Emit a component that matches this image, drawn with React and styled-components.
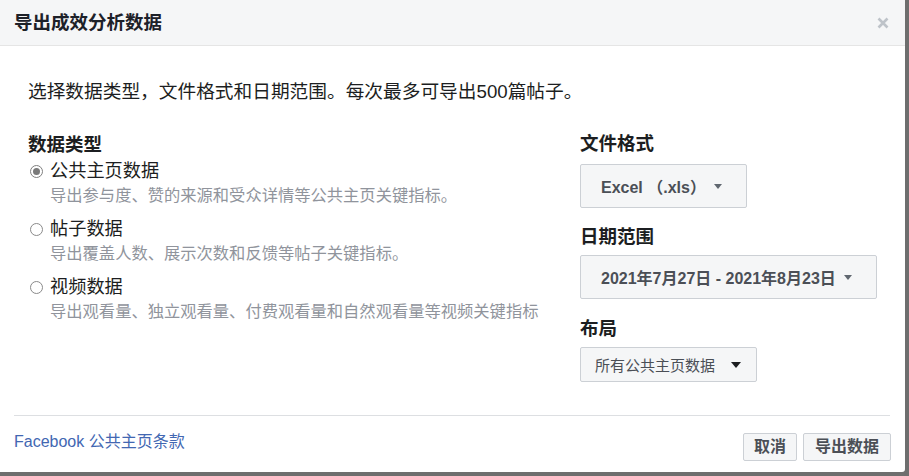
import React from "react";
import styled, { createGlobalStyle } from "styled-components";

const GlobalStyle = createGlobalStyle`
  html, body {
    margin: 0;
    padding: 0;
    background: #6e6e6e;
  }
  body {
    font-family: "Liberation Sans", "Noto Sans CJK SC", sans-serif;
    color: #1c1e21;
  }
`;

const Dialog = styled.div`
  width: 905px;
  height: 472px;
  background: #fff;
  display: flex;
  flex-direction: column;
  border-bottom-right-radius: 3px;
  overflow: hidden;
`;

const Header = styled.div`
  height: 45px;
  flex-shrink: 0;
  background: #f5f6f7;
  border-bottom: 1px solid #e5e5e5;
  display: flex;
  align-items: center;
  justify-content: space-between;
  padding: 0 16px 0 14px;

  h1 {
    margin: 0;
    font-size: 18.5px;
    font-weight: bold;
    color: #1d2129;
    line-height: 24px;
  }
`;

const Close = styled.button`
  all: unset;
  display: flex;
  width: 12px;
  height: 12px;
  cursor: pointer;
`;

const Body = styled.div`
  flex: 1;
  padding: 34px 0 0 28px;
`;

const Intro = styled.p`
  margin: 0 0 29px;
  font-size: 18.7px;
  line-height: 24px;
  color: #1c1e21;
`;

const Columns = styled.div`
  display: grid;
  grid-template-columns: 552px auto;
`;

const Heading = styled.div`
  font-size: 18.5px;
  font-weight: bold;
  line-height: 24px;
  color: #1c1e21;
  margin-bottom: ${(p) => p.$gap || 0}px;
`;

const Option = styled.div`
  margin-top: ${(p) => (p.$first ? 2 : 10)}px;
`;

const OptionRow = styled.label`
  display: flex;
  align-items: center;
  font-size: 18.2px;
  line-height: 25px;
  color: #1c1e21;
  cursor: pointer;
`;

const Radio = styled.span`
  width: 11px;
  height: 11px;
  margin: 0 7px 0 2px;
  border: 1px solid ${(p) => (p.$checked ? "#7f7f7f" : "#8a8a8a")};
  border-radius: 50%;
  display: flex;
  align-items: center;
  justify-content: center;
  flex-shrink: 0;

  &::after {
    content: "";
    width: 7px;
    height: 7px;
    border-radius: 50%;
    background: ${(p) => (p.$checked ? "#7a7a7a" : "transparent")};
  }
`;

const Desc = styled.div`
  padding-left: 22px;
  font-size: 16.3px;
  line-height: 23px;
  color: #90949c;
`;

const Select = styled.button`
  all: unset;
  box-sizing: border-box;
  display: inline-flex;
  align-items: center;
  gap: ${(p) => (p.$small ? 16 : 8)}px;
  height: ${(p) => (p.$small ? 35 : 44)}px;
  padding: ${(p) => (p.$small ? "0 15px 0 14px" : "0 24px 0 20px")};
  background: #f5f6f7;
  border: 1px solid #ccd0d5;
  border-radius: 2px;
  font-size: ${(p) => (p.$small ? 15 : 16)}px;
  font-weight: ${(p) => (p.$small ? "normal" : "bold")};
  color: #4b4f56;
  margin-bottom: ${(p) => p.$gap || 0}px;
  cursor: pointer;
`;

const Caret = styled.span`
  width: 0;
  height: 0;
  border-left: ${(p) => (p.$big ? 5 : 4)}px solid transparent;
  border-right: ${(p) => (p.$big ? 5 : 4)}px solid transparent;
  border-top: ${(p) => (p.$big ? 6 : 5)}px solid ${(p) => (p.$big ? "#1c1e21" : "#606770")};
`;

const Right = styled.div`
  display: flex;
  flex-direction: column;
  align-items: flex-start;
  margin-top: -1px;
`;

const Footer = styled.div`
  flex-shrink: 0;
  height: 57px;
  margin: 0 15px 0 14px;
  border-top: 1px solid #dddfe2;
  box-sizing: border-box;
  display: flex;
  justify-content: space-between;
  align-items: flex-start;
  padding-top: 16px;
`;

const TermsLink = styled.a`
  font-size: 16px;
  line-height: 20px;
  color: #4267b2;
  text-decoration: none;
`;

const Buttons = styled.div`
  display: flex;
  gap: 6px;
  margin-top: 1px;
  margin-right: -1px;
`;

const Button = styled.button`
  all: unset;
  box-sizing: border-box;
  height: 28px;
  padding: 0 ${(p) => p.$pad}px;
  background: #f5f6f7;
  border: 1px solid #ccd0d5;
  border-radius: 2px;
  font-size: 16px;
  font-weight: bold;
  line-height: 26px;
  color: #4b4f56;
  cursor: pointer;
`;

const options = [
  { label: "公共主页数据", desc: "导出参与度、赞的来源和受众详情等公共主页关键指标。", checked: true },
  { label: "帖子数据", desc: "导出覆盖人数、展示次数和反馈等帖子关键指标。" },
  { label: "视频数据", desc: "导出观看量、独立观看量、付费观看量和自然观看量等视频关键指标" },
];

export default function App() {
  return (
    <>
      <GlobalStyle />
      <Dialog>
        <Header>
          <h1>导出成效分析数据</h1>
          <Close aria-label="关闭">
            <svg width="12" height="12" viewBox="0 0 12 12">
              <path d="M1.5 1.5 L10.5 10.5 M10.5 1.5 L1.5 10.5" stroke="#bec3c9" strokeWidth="2.6" />
            </svg>
          </Close>
        </Header>
        <Body>
          <Intro>选择数据类型，文件格式和日期范围。每次最多可导出500篇帖子。</Intro>
          <Columns>
            <div>
              <Heading>数据类型</Heading>
              {options.map((o, i) => (
                <Option key={o.label} $first={i === 0}>
                  <OptionRow>
                    <Radio $checked={o.checked} />
                    {o.label}
                  </OptionRow>
                  <Desc>{o.desc}</Desc>
                </Option>
              ))}
            </div>
            <Right>
              <Heading $gap={8}>文件格式</Heading>
              <Select $gap={17}>
                Excel （.xls）
                <Caret />
              </Select>
              <Heading $gap={6}>日期范围</Heading>
              <Select $gap={18}>
                2021年7月27日 - 2021年8月23日
                <Caret />
              </Select>
              <Heading $gap={6}>布局</Heading>
              <Select $small>
                所有公共主页数据
                <Caret $big />
              </Select>
            </Right>
          </Columns>
        </Body>
        <Footer>
          <TermsLink href="#">Facebook 公共主页条款</TermsLink>
          <Buttons>
            <Button $pad={10}>取消</Button>
            <Button $pad={11}>导出数据</Button>
          </Buttons>
        </Footer>
      </Dialog>
    </>
  );
}
